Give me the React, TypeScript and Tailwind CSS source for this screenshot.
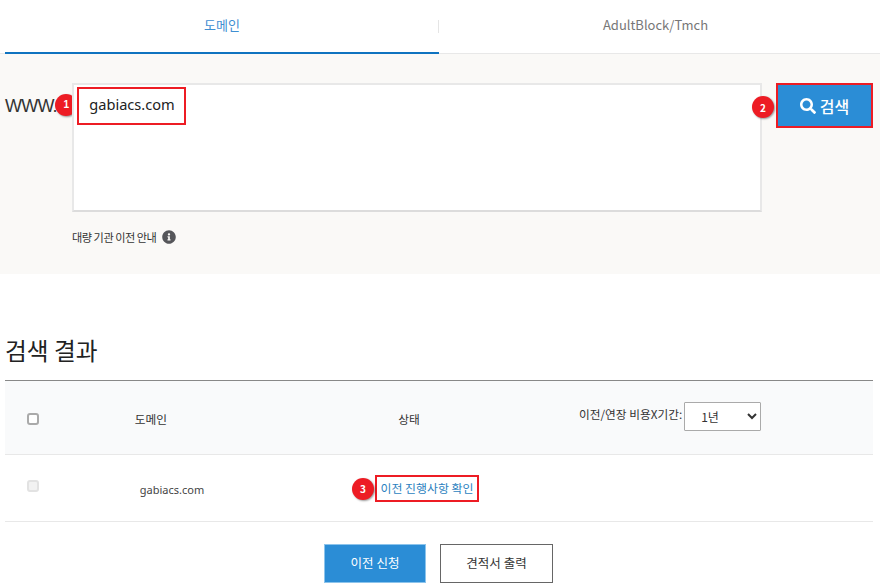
import { FaSearch, FaInfoCircle } from "react-icons/fa";

const Badge = ({ n, className }: { n: string; className: string }) => (
  <span
    className={`absolute flex h-[22px] w-[22px] items-center justify-center rounded-full bg-[#ed1c24] text-[10px] font-bold text-white shadow-[1px_1px_2px_rgba(0,0,0,0.4)] ${className}`}
  >
    {n}
  </span>
);

export default function App() {
  return (
    <div className="h-[586px] w-[880px] overflow-hidden bg-white font-['Noto_Sans_CJK_KR','Noto_Sans',sans-serif] text-[#333]">
      {/* tabs */}
      <div className="flex h-[54px] border-b border-[#e8e8e8] pl-[5px] pr-[8px]">
        <div className="flex h-[54px] w-[434px] items-center justify-center border-b-2 border-[#0f73c0] pb-[3px] text-[13px] text-[#3f8fd2]">
          도메인
        </div>
        <div className="relative flex h-[53px] flex-1 items-center justify-center pb-[3px] text-[13px] text-[#777]">
          <span className="absolute left-[-1px] top-[20px] h-[13px] w-px bg-[#e5e5e5]" />
          AdultBlock/Tmch
        </div>
      </div>

      {/* search panel */}
      <div className="flex h-[220px] bg-[#faf9f7] pl-[5px] pr-[7px] pt-[29px]">
        <div className="relative w-[67px] pt-[9px] text-[18px] leading-[28px] tracking-[-0.8px] text-[#333] font-['Liberation_Sans',sans-serif]">
          WWW.
          <Badge n="1" className="left-[50px] top-[11px]" />
        </div>
        <div className="flex flex-col">
          <div className="relative h-[129px] w-[690px] border-2 border-[#e8e8e8] border-b-[#dcdcdc] bg-white">
            <div className="absolute left-[3px] top-[2px] flex h-[38px] w-[109px] items-center justify-center border-2 border-[#ed1c24] pb-[3px] pl-[1px] text-[14.6px] text-[#222] font-['Noto_Sans',sans-serif]">
              gabiacs.com
            </div>
          </div>
          <div className="mt-[17px] flex items-center gap-[6px] text-[11.2px] tracking-[-0.5px] text-[#333]">
            대량 기관 이전 안내
            <FaInfoCircle size={14} className="text-[#55565a]" />
          </div>
        </div>
        <div className="relative ml-[14px] h-[45px] w-[97px]">
          <Badge n="2" className="left-[-24px] top-[13px]" />
          <button className="flex h-full w-full items-center justify-center gap-[4px] border-2 border-[#ed1c24] bg-[#2b8dd6] text-[16px] font-medium text-white">
            <FaSearch size={16} />
            검색
          </button>
        </div>
      </div>

      {/* results */}
      <div className="px-[5px] pt-[59px]">
        <h2 className="h-[47px] text-[23.7px] leading-[34px] text-[#222]">검색 결과</h2>
        <div className="flex h-[75px] w-[868px] items-center border-y border-t-[#888] border-b-[#e8e8e8] bg-[#f9fafb] pt-[2px] text-[11.7px]">
          <div className="flex w-[56px] justify-center">
            <input type="checkbox" className="h-[12px] w-[12px] appearance-none rounded-[3px] border-2 border-[#aaa] bg-white" />
          </div>
          <div className="w-[180px] text-center">도메인</div>
          <div className="w-[336px] text-center">상태</div>
          <div className="ml-[2px] flex items-center gap-[2px] pb-[5px]">
            <span className="relative bottom-[2px]">이전/연장 비용X기간:</span>
            <select className="h-[29px] w-[77px] rounded-[1px] border border-[#aaa] bg-white pl-[12px] text-[12px]">
              <option>1년</option>
            </select>
          </div>
        </div>
        <div className="flex h-[67px] w-[868px] items-center border-b border-[#e8e8e8] text-[11.5px]">
          <div className="flex w-[56px] justify-center pb-[5px]">
            <input type="checkbox" disabled className="h-[12px] w-[12px] appearance-none rounded-[3px] border-2 border-[#e2e2e2] bg-[#f2f2f2]" />
          </div>
          <div className="w-[222px] pt-[5px] text-center font-['Noto_Sans',sans-serif] text-[11px] text-[#444]">
            gabiacs.com
          </div>
          <div className="relative ml-[92px] flex h-[27px] w-[104px] items-center justify-center border-2 border-[#ed1c24] text-[11.9px] text-[#2b7fc0]">
            이전 진행사항 확인
            <Badge n="3" className="left-[-25px] top-[1px]" />
          </div>
        </div>
        <div className="mt-[22px] flex justify-center gap-[14px] pr-[3px]">
          <button className="h-[39px] w-[102px] border border-[#8cc4ec] bg-[#2b8dd6] text-[12.5px] text-white">
            이전 신청
          </button>
          <button className="h-[39px] w-[113px] border border-[#666] bg-white text-[12.5px] text-[#333]">
            견적서 출력
          </button>
        </div>
      </div>
    </div>
  );
}
